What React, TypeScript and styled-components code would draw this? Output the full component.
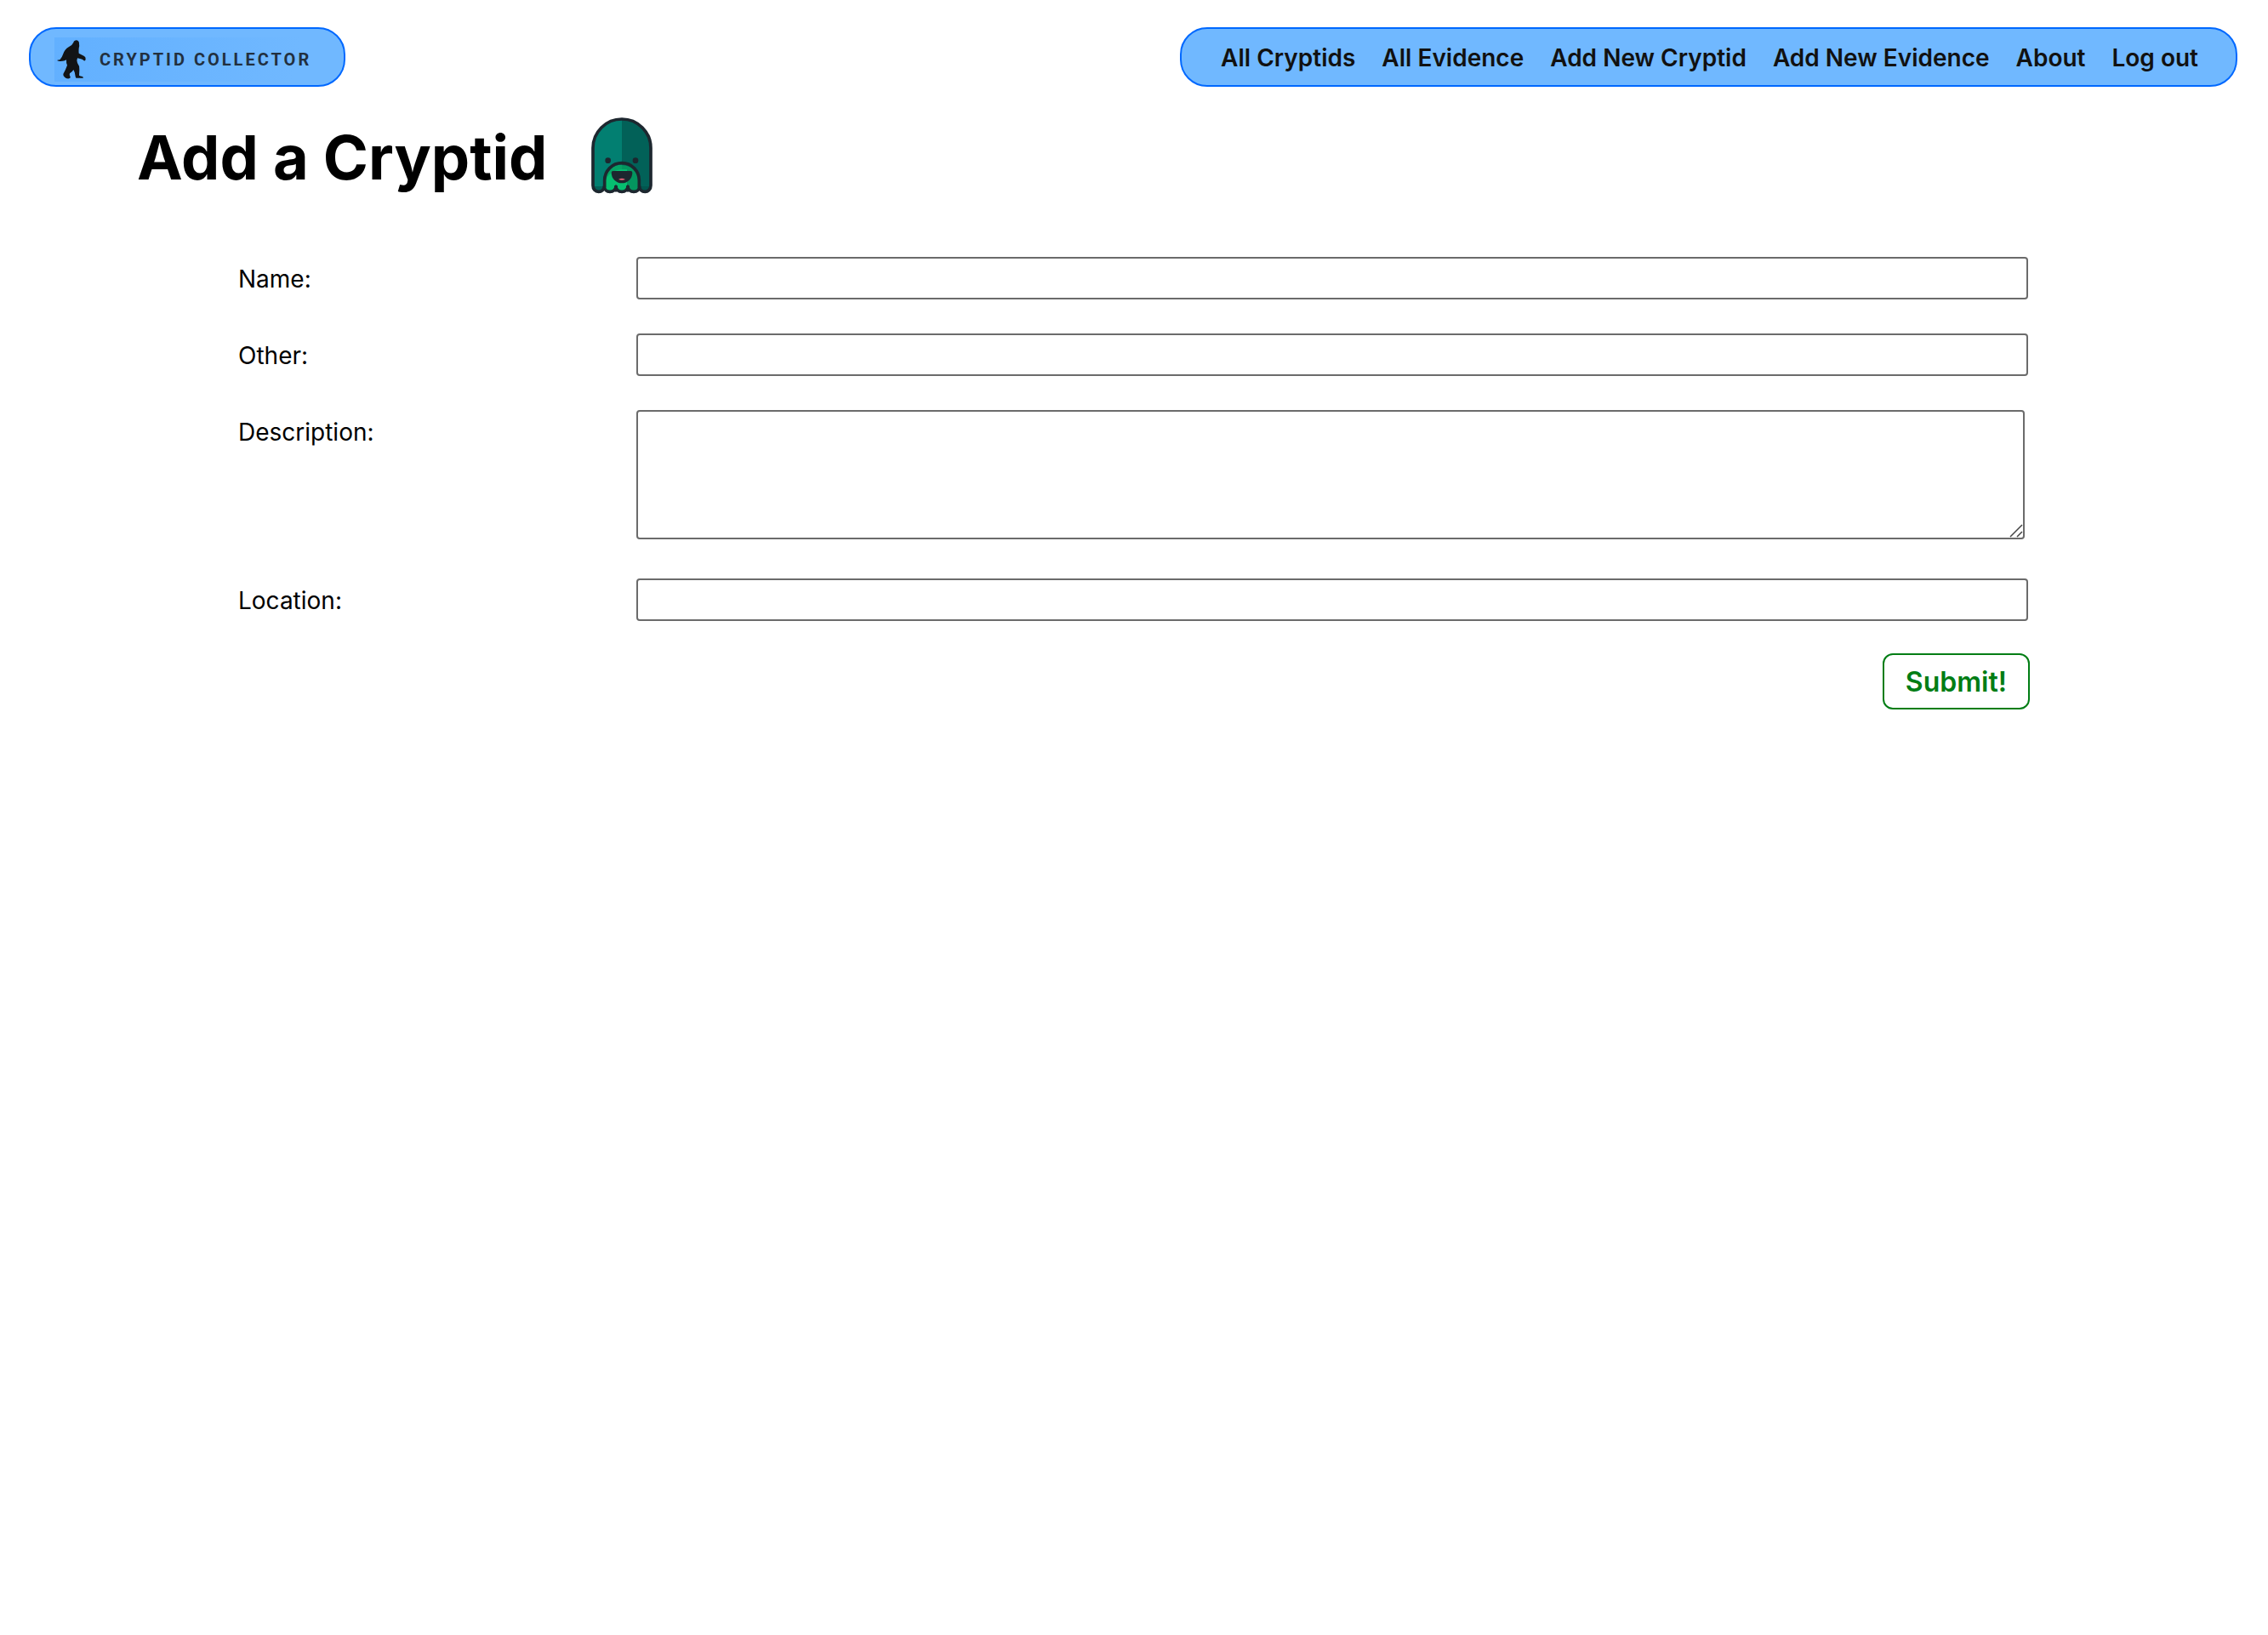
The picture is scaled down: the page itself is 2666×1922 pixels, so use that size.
import React from "react";
import styled, { createGlobalStyle } from "styled-components";

const GlobalStyle = createGlobalStyle`
  *, *::before, *::after { box-sizing: border-box; }
  body {
    margin: 0;
    background: #fff;
    color: #000;
    font-family: Inter, "Liberation Sans", sans-serif;
    font-size: 28px;
  }
`;

const Header = styled.header`
  display: flex;
  justify-content: space-between;
  align-items: stretch;
  padding: 32px 36px 0 34px;
`;

const Brand = styled.a`
  display: block;
  height: 70px;
  padding: 10px 28px 4px;
  border: 2px solid #0068ff;
  border-radius: 32px;
  background: #70b8ff;
  text-decoration: none;
`;

const BrandPlate = styled.span`
  display: flex;
  align-items: center;
  gap: 16px;
  width: 312px;
  height: 52px;
  padding-left: 3px;
  background: linear-gradient(100deg, #62b0ff, #70b8ff 90%);

  svg { flex: none; }
`;

const BrandName = styled.span`
  color: #22303f;
  font-family: Roboto, sans-serif;
  font-size: 20px;
  font-weight: 700;
  line-height: 24px;
  letter-spacing: 3px;
  white-space: nowrap;
`;

const Nav = styled.nav`
  display: flex;
  align-items: center;
  gap: 31px;
  padding: 2px 44px 0 46px;
  border: 2px solid #0068ff;
  border-radius: 32px;
  background: #70b8ff;
`;

const NavLink = styled.a`
  color: #111;
  font-weight: 600;
  line-height: 36px;
  text-decoration: none;
  white-space: nowrap;
`;

const TitleRow = styled.div`
  display: flex;
  align-items: center;
  gap: 52px;
  height: 90px;
  margin: 36px 0 74px;
  padding-left: 161px;
`;

const Title = styled.h1`
  margin: 0;
  padding-top: 4px;
  font-size: 72px;
  font-weight: 700;
  line-height: 86px;
`;

const Form = styled.form`
  padding: 0 280px;
`;

const Field = styled.div<{ $gap: number }>`
  display: grid;
  grid-template-columns: 2fr 7fr;
  align-items: start;
  margin-bottom: ${(p) => p.$gap}px;
`;

const Label = styled.label`
  line-height: 52px;
`;

const TextInput = styled.input`
  height: 50px;
  margin: 0 2px 0 0;
  padding: 2px 4px;
  border: 2px solid #6b6b6b;
  border-radius: 4px;
  background: #fff;
  font: inherit;
`;

const TextArea = styled.textarea`
  height: 152px;
  margin: 0 6px 0 0;
  padding: 4px;
  border: 2px solid #6b6b6b;
  border-radius: 4px;
  background: #fff;
  font: inherit;
  resize: none;
`;

const AreaWrap = styled.div`
  position: relative;
  display: grid;
`;

const Grip = styled.svg`
  position: absolute;
  right: 8px;
  bottom: 2px;
  pointer-events: none;
`;

const Actions = styled.div`
  display: flex;
  justify-content: flex-end;
`;

const Submit = styled.button`
  height: 66px;
  padding: 0 25px;
  border: 2px solid #007d14;
  border-radius: 12px;
  background: #fff;
  color: #007d14;
  font: inherit;
  font-size: 32px;
  font-weight: 600;
`;

const links = ["All Cryptids", "All Evidence", "Add New Cryptid", "Add New Evidence", "About", "Log out"];

function Bigfoot() {
  return (
    <svg width="34" height="46" viewBox="142 79 102 138" fill="#121416" aria-hidden="true">
      <path d="M200 88Q202 80 211 80Q221 82 220 93Q222 100 219 108Q218 118 219 126L238 136Q244 140 243 147Q242 154 237 152Q233 147 226 146L214 143Q210 152 214 160Q222 170 221 184L220 204Q224 207 232 208Q236 211 234 213L209 213Q206 207 206 202Q205 192 200 184Q196 192 187 197Q184 203 189 209Q190 215 184 215Q174 216 169 210Q163 206 164 199Q172 185 178 168Q174 160 175 149Q168 154 160 153Q150 156 142 151Q144 149 152 149Q160 140 163 130Q169 112 183 104Q196 98 200 88Z" />
    </svg>
  );
}

function Monster() {
  return (
    <svg width="72" height="90" viewBox="0 0 216 270" aria-hidden="true">
      <defs>
        <clipPath id="body">
          <path d="M6 108a102 102 0 0 1 204 0v132c0 13-9 22-20 22-12 0-20-8-20-18 0 10-8 18-20 18s-21-8-21-18c0 10-9 18-21 18s-21-8-21-18c0 10-9 18-21 18s-20-8-20-18c0 10-9 18-20 18-12 0-20-9-20-22z" />
        </clipPath>
      </defs>
      <g clipPath="url(#body)">
        <path fill="#027f71" d="M0 0h108v270H0z" />
        <path fill="#026158" d="M108 0h108v270H108z" />
        <path fill="#02635a" d="M0 243h44v27H0z" />
        <path fill="#02564f" d="M172 243h44v27h-44z" />
        <path fill="#06be70" d="M48 270v-42a60 60 0 0 1 60-60v102z" />
        <path fill="#04965f" d="M168 270v-42a60 60 0 0 0-60-60v102z" />
        <path fill="#06a264" d="M48 228a60 60 0 0 1 60-60v16c-32 0-52 20-60 44z" />
        <path fill="#06be70" d="M108 184h18v86h-18z" />
      </g>
      <g fill="none" stroke="#1d272f" strokeWidth="11" strokeLinejoin="round" strokeLinecap="round">
        <path d="M6 108a102 102 0 0 1 204 0v132c0 13-9 22-20 22-12 0-20-8-20-18 0 10-8 18-20 18s-21-8-21-18c0 10-9 18-21 18s-21-8-21-18c0 10-9 18-21 18s-20-8-20-18c0 10-9 18-20 18-12 0-20-9-20-22z" />
        <path d="M47 244v-22a61 61 0 0 1 122 0v22M87 258v-14M129 258v-14" />
      </g>
      <circle cx="59" cy="152" r="10" fill="#1d272f" />
      <circle cx="156" cy="152" r="10" fill="#1d272f" />
      <path fill="#1d272f" d="M71 195q0-6 6-6h62q6 0 6 6a37 37 0 0 1-74 0z" />
      <path fill="#f0647a" d="M96 219q12-8 24 0-12 5-24 0z" />
    </svg>
  );
}

export default function App() {
  return (
    <>
      <GlobalStyle />
      <Header>
        <Brand href="#home">
          <BrandPlate>
            <Bigfoot />
            <BrandName>CRYPTID COLLECTOR</BrandName>
          </BrandPlate>
        </Brand>
        <Nav>
          {links.map((text) => (
            <NavLink key={text} href="#nav">{text}</NavLink>
          ))}
        </Nav>
      </Header>
      <main>
        <TitleRow>
          <Title>Add a Cryptid</Title>
          <Monster />
        </TitleRow>
        <Form onSubmit={(e) => e.preventDefault()}>
          <Field $gap={38}>
            <Label htmlFor="name">Name:</Label>
            <TextInput id="name" type="text" />
          </Field>
          <Field $gap={38}>
            <Label htmlFor="other">Other:</Label>
            <TextInput id="other" type="text" />
          </Field>
          <Field $gap={46}>
            <Label htmlFor="description">Description:</Label>
            <AreaWrap>
              <TextArea id="description" />
              <Grip width="16" height="16" viewBox="0 0 16 16" stroke="#444" strokeWidth="1.500" aria-hidden="true">
                <path d="M1 15L15 1M9 15l6-6" />
              </Grip>
            </AreaWrap>
          </Field>
          <Field $gap={36}>
            <Label htmlFor="location">Location:</Label>
            <TextInput id="location" type="text" />
          </Field>
          <Actions>
            <Submit type="submit">Submit!</Submit>
          </Actions>
        </Form>
      </main>
    </>
  );
}
